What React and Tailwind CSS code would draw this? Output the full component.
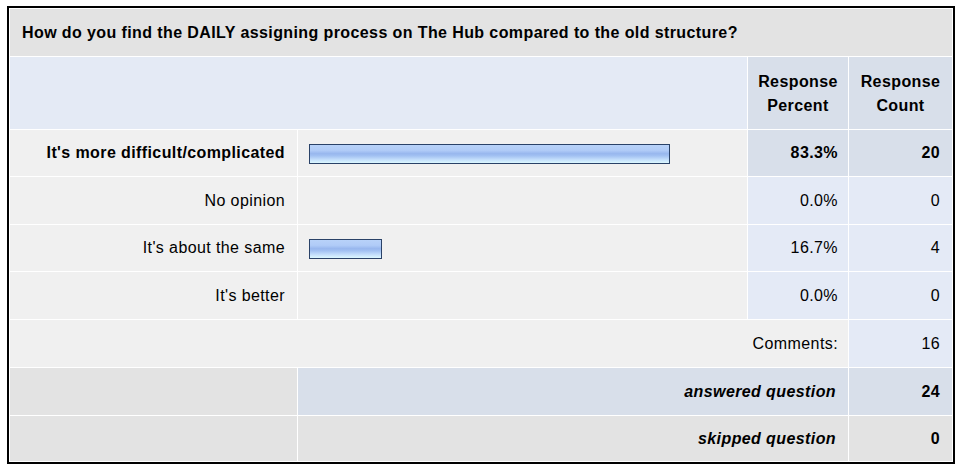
import React from 'react';

const rows = [
  { label: "It's more difficult/complicated", percent: 83.3, count: 20, top: true },
  { label: 'No opinion', percent: 0, count: 0 },
  { label: "It's about the same", percent: 16.7, count: 4 },
  { label: "It's better", percent: 0, count: 0 },
];

// bar widths in the picture: 83.3% -> 361px, 16.7% -> 75px
const barWidth = (p) => Math.round(p * 4.32) + 1;

const Bar = ({ percent }) => (
  <div
    className="mt-px h-[20px] border border-[#2a4268] bg-[linear-gradient(to_bottom,#b8d2f9_0%,#b0cbf7_30%,#98b7ee_48%,#a2c1f2_60%,#c2ddfb_80%,#dcf8ff_100%)]"
    style={{ width: barWidth(percent) }}
  />
);

export default function App() {
  return (
    <div className="min-h-[470px] bg-white pl-[7px] pt-[6px] font-['Liberation_Sans',Arial,sans-serif] text-[16px] tracking-[0.4px] text-black">
      <div className="w-[948px] border-2 border-black bg-white">
        <div className="grid grid-cols-[287px_449px_100px_103px] grid-rows-[47px_72px_46px_47px_46px_47px_47px_47px_45px] gap-px p-px">
          {/* question */}
          <div className="col-span-4 flex items-center bg-[#e3e3e3] px-3 pt-px font-bold">
            How do you find the DAILY assigning process on The Hub compared to the old structure?
          </div>

          {/* column headers */}
          <div className="col-span-2 bg-[#e4eaf5]" />
          <div className="flex items-center justify-center bg-[#d8dfea] pt-0.5 text-center font-bold leading-6">
            Response<br />Percent
          </div>
          <div className="flex items-center justify-center bg-[#d8dfea] pt-0.5 text-center font-bold leading-6">
            Response<br />Count
          </div>

          {rows.map((r) => (
            <React.Fragment key={r.label}>
              <div className={`flex items-center justify-end bg-[#f0f0f0] pr-3 ${r.top ? 'font-bold' : ''}`}>
                {r.label}
              </div>
              <div className="flex items-center bg-[#f0f0f0] pl-[11px]">
                {r.percent > 0 && <Bar percent={r.percent} />}
              </div>
              <div className={`flex items-center justify-end pr-[10px] ${r.top ? 'bg-[#d8dfea] font-bold' : 'bg-[#e4eaf6]'}`}>
                {r.percent.toFixed(1)}%
              </div>
              <div className={`flex items-center justify-end pr-3 ${r.top ? 'bg-[#d8dfea] font-bold' : 'bg-[#e4eaf6]'}`}>
                {r.count}
              </div>
            </React.Fragment>
          ))}

          {/* comments */}
          <div className="col-span-3 flex items-center justify-end bg-[#f0f0f0] pr-[10px]">Comments:</div>
          <div className="flex items-center justify-end bg-[#e4eaf6] pr-3">16</div>

          {/* answered */}
          <div className="bg-[#e3e3e3]" />
          <div className="col-span-2 flex items-center justify-end bg-[#d8dfea] pr-3 font-bold italic">
            answered question
          </div>
          <div className="flex items-center justify-end bg-[#d8dfea] pr-3 font-bold">24</div>

          {/* skipped */}
          <div className="bg-[#e3e3e3]" />
          <div className="col-span-2 flex items-center justify-end bg-[#e3e3e3] pr-3 font-bold italic">
            skipped question
          </div>
          <div className="flex items-center justify-end bg-[#e3e3e3] pr-3 font-bold">0</div>
        </div>
      </div>
    </div>
  );
}
